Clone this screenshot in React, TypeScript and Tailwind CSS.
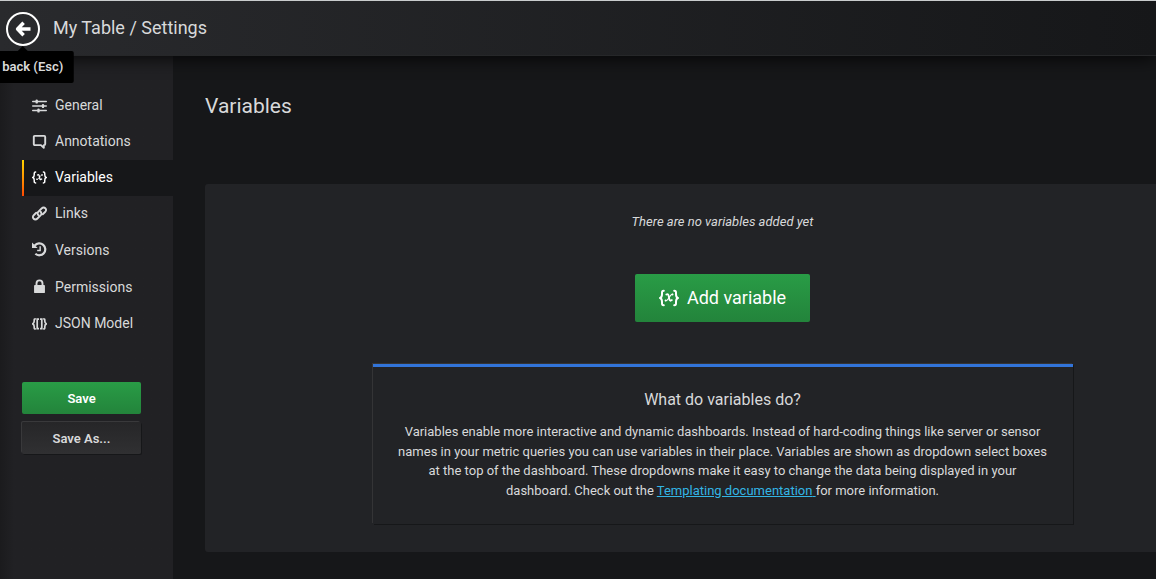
import type { ReactNode } from 'react';

type IconProps = { className?: string };

function SlidersIcon({ className }: IconProps) {
  return (
    <svg viewBox="0 0 15 15" className={className} fill="none" stroke="currentColor" aria-hidden="true">
      <path d="M0.7 3.500h13.600M0.7 8h13.600M0.700 12.500h13.600" strokeWidth="1.400" strokeLinecap="round" />
      <path d="M4.700 2.600v1.800M11 7.100v1.800M6.500 11.600v1.800" strokeWidth="2.400" strokeLinecap="round" />
    </svg>
  );
}

function CommentIcon({ className }: IconProps) {
  return (
    <svg viewBox="0 0 15 15" className={className} fill="none" stroke="currentColor" aria-hidden="true">
      <path d="M2.800 1.900h9.400q1 0 1 1v7.200q0 1-1 1h-.4v2.700l-2.900-2.700H2.800q-1 0-1-1V2.900q0-1 1-1z" strokeWidth="1.900" strokeLinejoin="round" />
    </svg>
  );
}

function VariableIcon({ className }: IconProps) {
  return (
    <svg viewBox="0 0 20 18" className={className} fill="none" stroke="currentColor" strokeLinecap="round" aria-hidden="true">
      <path d="M4.800 1.800C3.200 1.800 2.900 2.500 3 4.500C3.100 7 2.900 8.300 1.200 9C2.900 9.700 3.100 11 3 13.500C2.900 15.500 3.200 16.200 4.800 16.200" strokeWidth="2" />
      <path d="M15.200 1.800C16.800 1.800 17.100 2.500 17 4.500C16.900 7 17.100 8.300 18.800 9C17.100 9.700 16.900 11 17 13.500C17.100 15.500 16.800 16.200 15.200 16.200" strokeWidth="2" />
      <path d="M7.300 5.600C9.300 4.300 9.600 6.300 10 8.500C10.400 11 10.700 12.700 12.900 11.100" strokeWidth="1.800" />
      <path d="M13.500 5.300C11.300 4.400 8.800 13 6.500 11.600" strokeWidth="1.100" />
      <path d="M13.400 5.600h.1M6.600 11.400h.1" strokeWidth="2" />
    </svg>
  );
}

function LinkIcon({ className }: IconProps) {
  return (
    <svg viewBox="0 0 16 16" className={className} fill="none" stroke="currentColor" strokeWidth="2" strokeLinecap="round" aria-hidden="true">
      <path d="M7 10a2.500 2.500 0 0 1-.4-3.700l3.900-3.900a2.500 2.500 0 0 1 3.700 0a2.500 2.500 0 0 1 0 3.700l-2.700 2.700" />
      <path d="M9 6a2.500 2.500 0 0 1 .4 3.700l-3.900 3.900a2.500 2.500 0 0 1-3.700 0a2.500 2.500 0 0 1 0-3.700l2.700-2.700" />
    </svg>
  );
}

function HistoryIcon({ className }: IconProps) {
  return (
    <svg viewBox="0 0 16 16" className={className} fill="none" stroke="currentColor" aria-hidden="true">
      <path d="M3 3.800A6.300 6.300 0 1 1 3.600 12.500" strokeWidth="2.400" />
      <path d="M0 0.500v6h6z" fill="currentColor" stroke="none" />
      <path d="M8.700 4.500V9H5.500" strokeWidth="1.500" />
    </svg>
  );
}

function LockIcon({ className }: IconProps) {
  return (
    <svg viewBox="0 0 16 16" className={className} aria-hidden="true">
      <path d="M4.800 7V4.700a3.200 3.200 0 0 1 6.400 0V7" fill="none" stroke="currentColor" strokeWidth="2" />
      <rect x="2.200" y="6.500" width="11.600" height="8.500" rx="0.900" fill="currentColor" />
    </svg>
  );
}

function JsonIcon({ className }: IconProps) {
  return (
    <svg viewBox="0 0 15 15" className={className} fill="none" stroke="currentColor" strokeWidth="1.700" aria-hidden="true">
      <path d="M3.800 2.900C2.400 2.900 2.100 3.100 2.200 4.700C2.300 6.500 2 7.400 0.600 7.900C2 8.400 2.300 9.300 2.200 11.100C2.100 12.700 2.400 12.900 3.800 12.900" />
      <path d="M11.200 2.900C12.600 2.900 12.900 3.100 12.800 4.700C12.700 6.500 13 7.400 14.400 7.900C13 8.400 12.700 9.300 12.800 11.100C12.900 12.700 12.600 12.900 11.200 12.900" />
      <path d="M7 3.200H5.200v9.400H7M8 3.200h1.800v9.400H8" />
    </svg>
  );
}

function ArrowLeftIcon({ className }: IconProps) {
  return (
    <svg viewBox="0 0 16 16" className={className} fill="none" stroke="currentColor" strokeWidth="3.500" strokeLinejoin="round" aria-hidden="true">
      <path d="M8.600 1.700L2.600 8l6 6.300M3 8H15.500" />
    </svg>
  );
}

const sections: { label: string; icon: ReactNode; height: string; active?: boolean }[] = [
  { label: 'General', icon: <SlidersIcon className="size-[15px]" />, height: 'h-9' },
  { label: 'Annotations', icon: <CommentIcon className="size-[15px]" />, height: 'h-9' },
  { label: 'Variables', icon: <VariableIcon className="size-[15px]" />, height: 'h-9', active: true },
  { label: 'Links', icon: <LinkIcon className="size-[15px]" />, height: 'h-9' },
  { label: 'Versions', icon: <HistoryIcon className="size-[15px]" />, height: 'h-[37px]' },
  { label: 'Permissions', icon: <LockIcon className="size-[15px]" />, height: 'h-[37px]' },
  { label: 'JSON Model', icon: <JsonIcon className="size-[15px]" />, height: 'h-9' },
];

function Header() {
  return (
    <header className="relative z-10 flex h-14 items-center gap-[13px] border-y border-t-[#c9cccd] border-b-[#262729] bg-linear-to-r from-[#292a2d] to-[#161719] pt-0.5 pl-1.5 shadow-[0_0_20px_black]">
      <div className="relative">
        <button
          type="button"
          aria-label="Go back (Esc)"
          className="flex size-[34px] items-center justify-center rounded-full border-2 border-white text-white"
        >
          <ArrowLeftIcon className="size-4" />
        </button>
        <div
          role="tooltip"
          className="absolute top-full left-1/2 mt-[5px] -translate-x-1/2 rounded-xs bg-black px-[10px] py-1.5 text-[13px] leading-5 font-semibold whitespace-nowrap text-[#d8d9da]"
        >
          <span className="absolute -top-[5px] left-1/2 -translate-x-1/2 border-x-[5px] border-b-[5px] border-x-transparent border-b-black" />
          Go back (Esc)
        </div>
      </div>
      <h1 className="pb-0.5 text-lg text-[#d8d9da]">My Table / Settings</h1>
    </header>
  );
}

function Sidebar() {
  return (
    <aside className="w-[173px] shrink-0 bg-linear-to-r from-[#1b1b1d] to-[#212124] to-[14px] pt-8">
      <nav className="flex flex-col pl-[22px]">
        {sections.map(({ label, icon, height, active }) => (
          <a
            key={label}
            href="#"
            aria-current={active ? 'page' : undefined}
            className={`relative flex items-center gap-2 pb-0.5 pl-2.5 text-sm ${height} ${
              active ? 'bg-[#161719] text-white' : 'text-[#d8d9da]'
            }`}
          >
            {active && <span className="absolute inset-y-0 left-0 w-0.5 bg-linear-to-b from-[#ffd500] to-[#ff4400]" />}
            {icon}
            {label}
          </a>
        ))}
      </nav>
      <div className="mt-10 flex flex-col gap-2 pr-8 pl-[22px] text-[13px] font-semibold">
        <button type="button" className="h-8 rounded-xs bg-linear-to-b from-[#299c46] to-[#23843b] pt-0.5 text-white">
          Save
        </button>
        <button
          type="button"
          className="h-8 rounded-xs bg-linear-to-b from-[#262628] to-[#303032] pt-0.5 text-[#d8d9da] shadow-[-1px_-1px_0_0_#39393b,1px_1px_0_0_#161719]"
        >
          Save As...
        </button>
      </div>
    </aside>
  );
}

function VariablesPanel() {
  return (
    <main className="min-w-0 flex-1 pt-9 pl-8">
      <h2 className="text-[21px] leading-7 text-[#d8d9da]">Variables</h2>
      <section className="mt-16 mb-7 flex flex-col items-center rounded-l-[3px] bg-[#222326] py-7 pr-7 pl-28 text-[#d8d9da]">
        <p className="text-[13px] leading-5 italic">There are no variables added yet</p>
        <button
          type="button"
          className="mt-[42px] flex h-12 items-center gap-2 rounded-xs bg-linear-to-b from-[#299c46] to-[#23843b] px-6 text-lg text-white"
        >
          <VariableIcon className="h-[18px] w-5" />
          Add variable
        </button>
        <div className="mt-[42px] w-full max-w-[700px] border-t-3 border-[#3274d9] px-6 pt-[21px] pb-6 text-center shadow-[-1px_-1px_0_0_#343436,1px_1px_0_0_#161719]">
          <h3 className="text-base leading-6">What do variables do?</h3>
          <p className="mt-2.5 text-[13px] leading-normal">
            Variables enable more interactive and dynamic dashboards. Instead of hard-coding things like server or sensor
            names in your metric queries you can use variables in their place. Variables are shown as dropdown select
            boxes at the top of the dashboard. These dropdowns make it easy to change the data being displayed in your
            dashboard. Check out the{' '}
            <a href="#" className="text-[#33b5e5] underline">
              Templating documentation{' '}
            </a>
            for more information.
          </p>
        </div>
      </section>
    </main>
  );
}

export default function App() {
  return (
    <div className="flex min-h-screen flex-col overflow-x-hidden bg-[#161719] font-[Roboto,sans-serif]">
      <Header />
      <div className="flex flex-1">
        <Sidebar />
        <VariablesPanel />
      </div>
    </div>
  );
}
